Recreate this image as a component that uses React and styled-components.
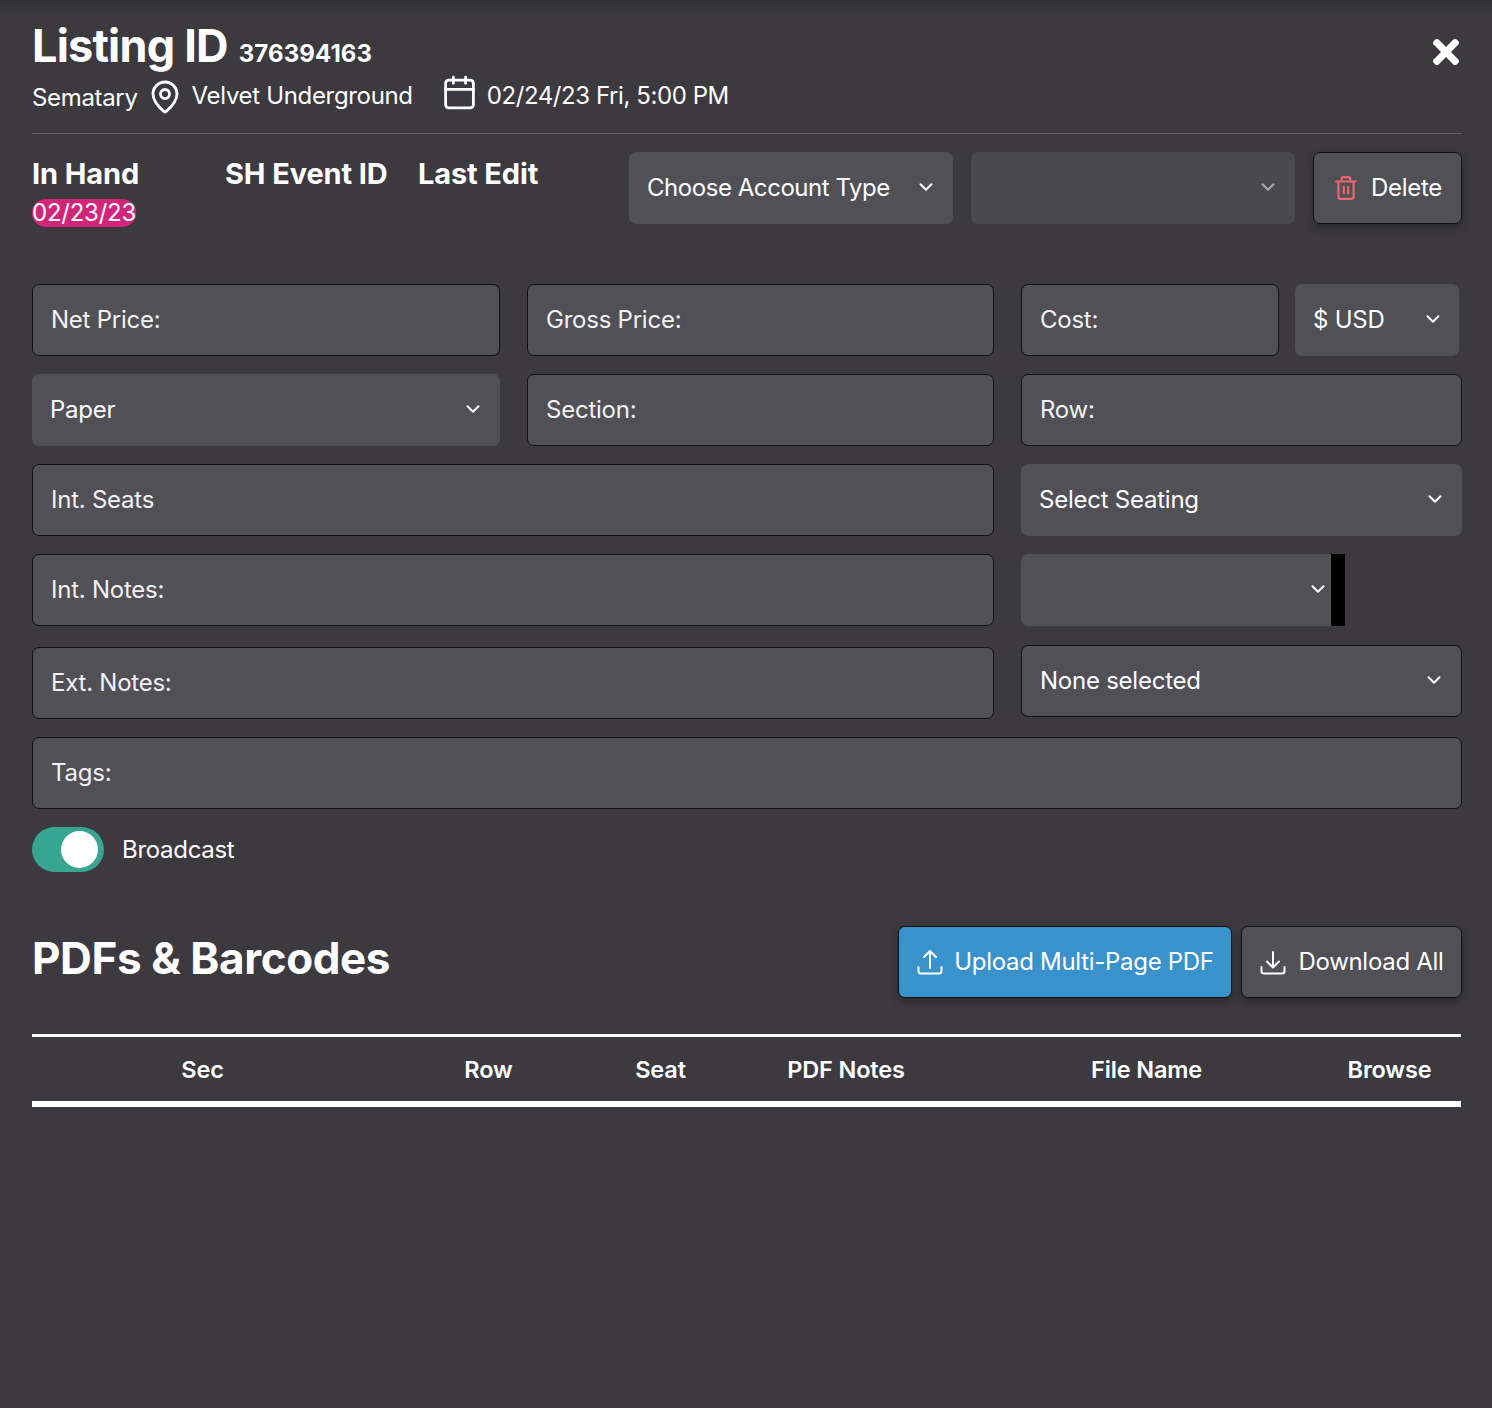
import React from 'react';
import styled, { createGlobalStyle } from 'styled-components';
import { Calendar, ChevronDown, MapPin, Trash2 } from 'lucide-react';
import { FaTimes } from 'react-icons/fa';

const GlobalStyle = createGlobalStyle`
  html, body {
    margin: 0;
    background: #3c3a3f;
  }
  * {
    box-sizing: border-box;
  }
`;

const Page = styled.div`
  position: relative;
  width: 1492px;
  height: 1408px;
  padding: 19px 30px 0 32px;
  overflow: hidden;
  background: linear-gradient(#323137 0, #3c3a3f 16px);
  color: #fff;
  font-family: Inter, 'Liberation Sans', sans-serif;
`;

const Title = styled.div`
  display: flex;
  align-items: baseline;
  height: 54px;
  font-weight: 700;
`;

const TitleMain = styled.span`
  font-size: 45px;
  line-height: 53px;
  letter-spacing: -0.8px;
`;

const TitleId = styled.span`
  margin-left: 11px;
  font-size: 24px;
  letter-spacing: 0.1px;
`;

const CloseButton = styled.div`
  position: absolute;
  top: 33px;
  left: 1427px;
  display: flex;
`;

const EventLine = styled.div`
  display: flex;
  align-items: center;
  height: 46px;
  font-size: 24px;
  letter-spacing: -0.33px;
`;

const EventText = styled.span`
  margin-left: ${p => p.$left || 0}px;
  margin-top: ${p => p.$shift || 0}px;
  letter-spacing: ${p => p.$spacing || -0.33}px;
  white-space: nowrap;
`;

const PinIcon = styled(MapPin)`
  margin: 2px 0 0 9px;
`;

const CalendarIcon = styled(Calendar)`
  margin: -7px 0 0 28px;
`;

const Divider = styled.div`
  height: 1px;
  margin-top: 14px;
  background: #5c5b60;
`;

const StatusRow = styled.div`
  display: flex;
  height: 72px;
  margin-top: 18px;
`;

const Stat = styled.div`
  width: ${p => p.$width}px;
  font-size: 29px;
  line-height: 44px;
  font-weight: 700;
  letter-spacing: -0.12px;
`;

const DateBadge = styled.div`
  width: 104px;
  height: 28px;
  margin-top: 3px;
  border-radius: 15px;
  background: #d3247b;
  font-size: 24px;
  font-weight: 400;
  line-height: 28px;
  letter-spacing: -0.25px;
  white-space: nowrap;
`;

const Select = styled.div`
  display: flex;
  align-items: center;
  justify-content: space-between;
  width: ${p => (p.$width ? `${p.$width}px` : '100%')};
  height: 72px;
  margin-left: ${p => p.$left || 0}px;
  padding: 0 ${p => p.$right ?? 16}px 0 ${p => p.$pad || 18}px;
  flex-shrink: 0;
  border-radius: ${p => (p.$bar ? '7px 0 0 7px' : '7px')};
  border: ${p => (p.$outlined ? '1px solid #111' : 'none')};
  border-right: ${p => (p.$bar ? '14px solid #000' : undefined)};
  background: ${p => (p.$dim ? '#4a494f' : '#515056')};
  font-size: 24px;
  letter-spacing: -0.24px;
`;

const SelectText = styled.span`
  margin-bottom: 2px;
  color: #fff;
  letter-spacing: ${p => (p.$tight ? -0.45 : -0.24)}px;
  white-space: nowrap;
`;

const SelectArrow = styled(ChevronDown)`
  margin: 0 0 2px auto;
`;

const Button = styled.div`
  display: flex;
  align-items: center;
  justify-content: center;
  flex-shrink: 0;
  width: ${p => p.$width}px;
  height: 72px;
  margin-left: ${p => p.$left || 0}px;
  gap: ${p => p.$gap || 10}px;
  border: 1px solid #111;
  border-radius: 7px;
  background: ${p => p.$bg || '#515056'};
  box-shadow: 0 4px 8px rgba(0, 0, 0, 0.3);
  font-size: 24px;
  letter-spacing: -0.3px;
  white-space: nowrap;
`;

const ButtonLabel = styled.span`
  margin-bottom: 2px;
`;

const Form = styled.div`
  display: flex;
  flex-direction: column;
  margin-top: 60px;
`;

const FormRow = styled.div`
  display: flex;
  margin-top: ${p => p.$top ?? 18}px;
`;

const Field = styled.div`
  display: flex;
  align-items: center;
  flex-shrink: 0;
  width: ${p => p.$width}px;
  height: 72px;
  margin-left: ${p => p.$left || 0}px;
  padding: 0 0 2px 18px;
  border: 1px solid #111;
  border-radius: 7px;
  background: #515056;
  font-size: 24px;
  letter-spacing: -0.24px;
  color: #f2f2f2;
`;

const RightColumn = styled.div`
  width: 441px;
  margin: ${p => p.$lift || 0}px 0 0 27px;
  flex-shrink: 0;
`;

const ToggleRow = styled.div`
  display: flex;
  align-items: center;
  height: 45px;
  margin-top: 18px;
  font-size: 24px;
  letter-spacing: -0.3px;
`;

const Track = styled.div`
  display: flex;
  align-items: center;
  justify-content: flex-end;
  width: 72px;
  height: 45px;
  padding-right: 6px;
  margin-right: 18px;
  border-radius: 23px;
  background: #38a593;
`;

const Knob = styled.div`
  width: 37px;
  height: 37px;
  border-radius: 50%;
  background: #fff;
`;

const SectionHead = styled.div`
  display: flex;
  align-items: center;
  height: 72px;
  margin-top: 54px;
`;

const SectionTitle = styled.h2`
  flex: 1;
  margin: 0;
  padding-bottom: 8px;
  font-size: 44px;
  font-weight: 700;
  letter-spacing: -0.4px;
`;

const HeaderTable = styled.div`
  display: flex;
  align-items: center;
  width: 1429px;
  height: 73px;
  margin-top: 36px;
  border-top: 3px solid #fff;
  border-bottom: 6px solid #fff;
`;

const HeaderCell = styled.div`
  width: ${p => p.$width}px;
  text-align: center;
  font-size: 23.5px;
  font-weight: 600;
  letter-spacing: -0.15px;
  white-space: nowrap;
`;

const TrayIcon = ({ down }) => (
  <svg width="28" height="28" viewBox="0 0 28 28" fill="none" stroke="#fff" strokeWidth="2" strokeLinecap="round" strokeLinejoin="round">
    <path d="M2.5 19v4a2.5 2.5 0 0 0 2.5 2.5h18a2.5 2.5 0 0 0 2.5-2.5v-4" />
    {down ? <path d="M14 4v15M8 13.5l6 6 6-6" /> : <path d="M14 20V3M8 9l6-6 6 6" />}
  </svg>
);

const Arrow = ({ color = '#fff' }) => <SelectArrow size={22} color={color} strokeWidth={2.2} />;

export default function App() {
  return (
    <Page>
      <GlobalStyle />
      <Title>
        <TitleMain>Listing ID</TitleMain>
        <TitleId>376394163</TitleId>
      </Title>
      <CloseButton>
        <FaTimes size={38} color="#fff" />
      </CloseButton>
      <EventLine>
        <EventText $shift={2}>Sematary</EventText>
        <PinIcon size={36} color="#fff" strokeWidth={1.9} />
        <EventText $left={9} $shift={-2}>Velvet Underground</EventText>
        <CalendarIcon size={37} color="#fff" strokeWidth={1.8} />
        <EventText $left={9} $shift={-2} $spacing={-0.42}>02/24/23 Fri, 5:00 PM</EventText>
      </EventLine>
      <Divider />
      <StatusRow>
        <Stat $width={193}>
          In Hand
          <DateBadge>02/23/23</DateBadge>
        </Stat>
        <Stat $width={193}>SH Event ID</Stat>
        <Stat $width={211}>Last Edit</Stat>
        <Select $width={324}>
          <SelectText $tight>Choose Account Type</SelectText>
          <Arrow />
        </Select>
        <Select $width={324} $left={18} $dim>
          <Arrow color="#aaa" />
        </Select>
        <Button $width={149} $left={18} $gap={12}>
          <Trash2 size={26} color="#e8686c" strokeWidth={2} />
          <ButtonLabel>Delete</ButtonLabel>
        </Button>
      </StatusRow>
      <Form>
        <FormRow $top={0}>
          <Field $width={468}>Net Price:</Field>
          <Field $width={467} $left={27}>Gross Price:</Field>
          <Field $width={258} $left={27}>Cost:</Field>
          <Select $width={164} $left={16} $right={15}>
            <SelectText>$ USD</SelectText>
            <Arrow />
          </Select>
        </FormRow>
        <FormRow>
          <Select $width={468}>
            <SelectText>Paper</SelectText>
            <Arrow />
          </Select>
          <Field $width={467} $left={27}>Section:</Field>
          <Field $width={441} $left={27}>Row:</Field>
        </FormRow>
        <FormRow>
          <Field $width={962}>Int. Seats</Field>
          <RightColumn>
            <Select>
              <SelectText>Select Seating</SelectText>
              <Arrow />
            </Select>
          </RightColumn>
        </FormRow>
        <FormRow>
          <Field $width={962}>Int. Notes:</Field>
          <RightColumn>
            <Select $width={324} $right={2} $bar>
              <Arrow />
            </Select>
          </RightColumn>
        </FormRow>
        <FormRow $top={21}>
          <Field $width={962}>Ext. Notes:</Field>
          <RightColumn $lift={-2}>
            <Select $outlined>
              <SelectText>None selected</SelectText>
              <Arrow />
            </Select>
          </RightColumn>
        </FormRow>
        <FormRow>
          <Field $width={1430}>Tags:</Field>
        </FormRow>
      </Form>
      <ToggleRow>
        <Track>
          <Knob />
        </Track>
        Broadcast
      </ToggleRow>
      <SectionHead>
        <SectionTitle>PDFs &amp; Barcodes</SectionTitle>
        <Button $width={334} $bg="#3a92cc">
          <TrayIcon />
          <ButtonLabel>Upload Multi-Page PDF</ButtonLabel>
        </Button>
        <Button $width={221} $left={9} $gap={11}>
          <TrayIcon down />
          <ButtonLabel>Download All</ButtonLabel>
        </Button>
      </SectionHead>
      <HeaderTable>
        <HeaderCell $width={341}>Sec</HeaderCell>
        <HeaderCell $width={231}>Row</HeaderCell>
        <HeaderCell $width={113}>Seat</HeaderCell>
        <HeaderCell $width={258}>PDF Notes</HeaderCell>
        <HeaderCell $width={343}>File Name</HeaderCell>
        <HeaderCell $width={143}>Browse</HeaderCell>
      </HeaderTable>
    </Page>
  );
}
